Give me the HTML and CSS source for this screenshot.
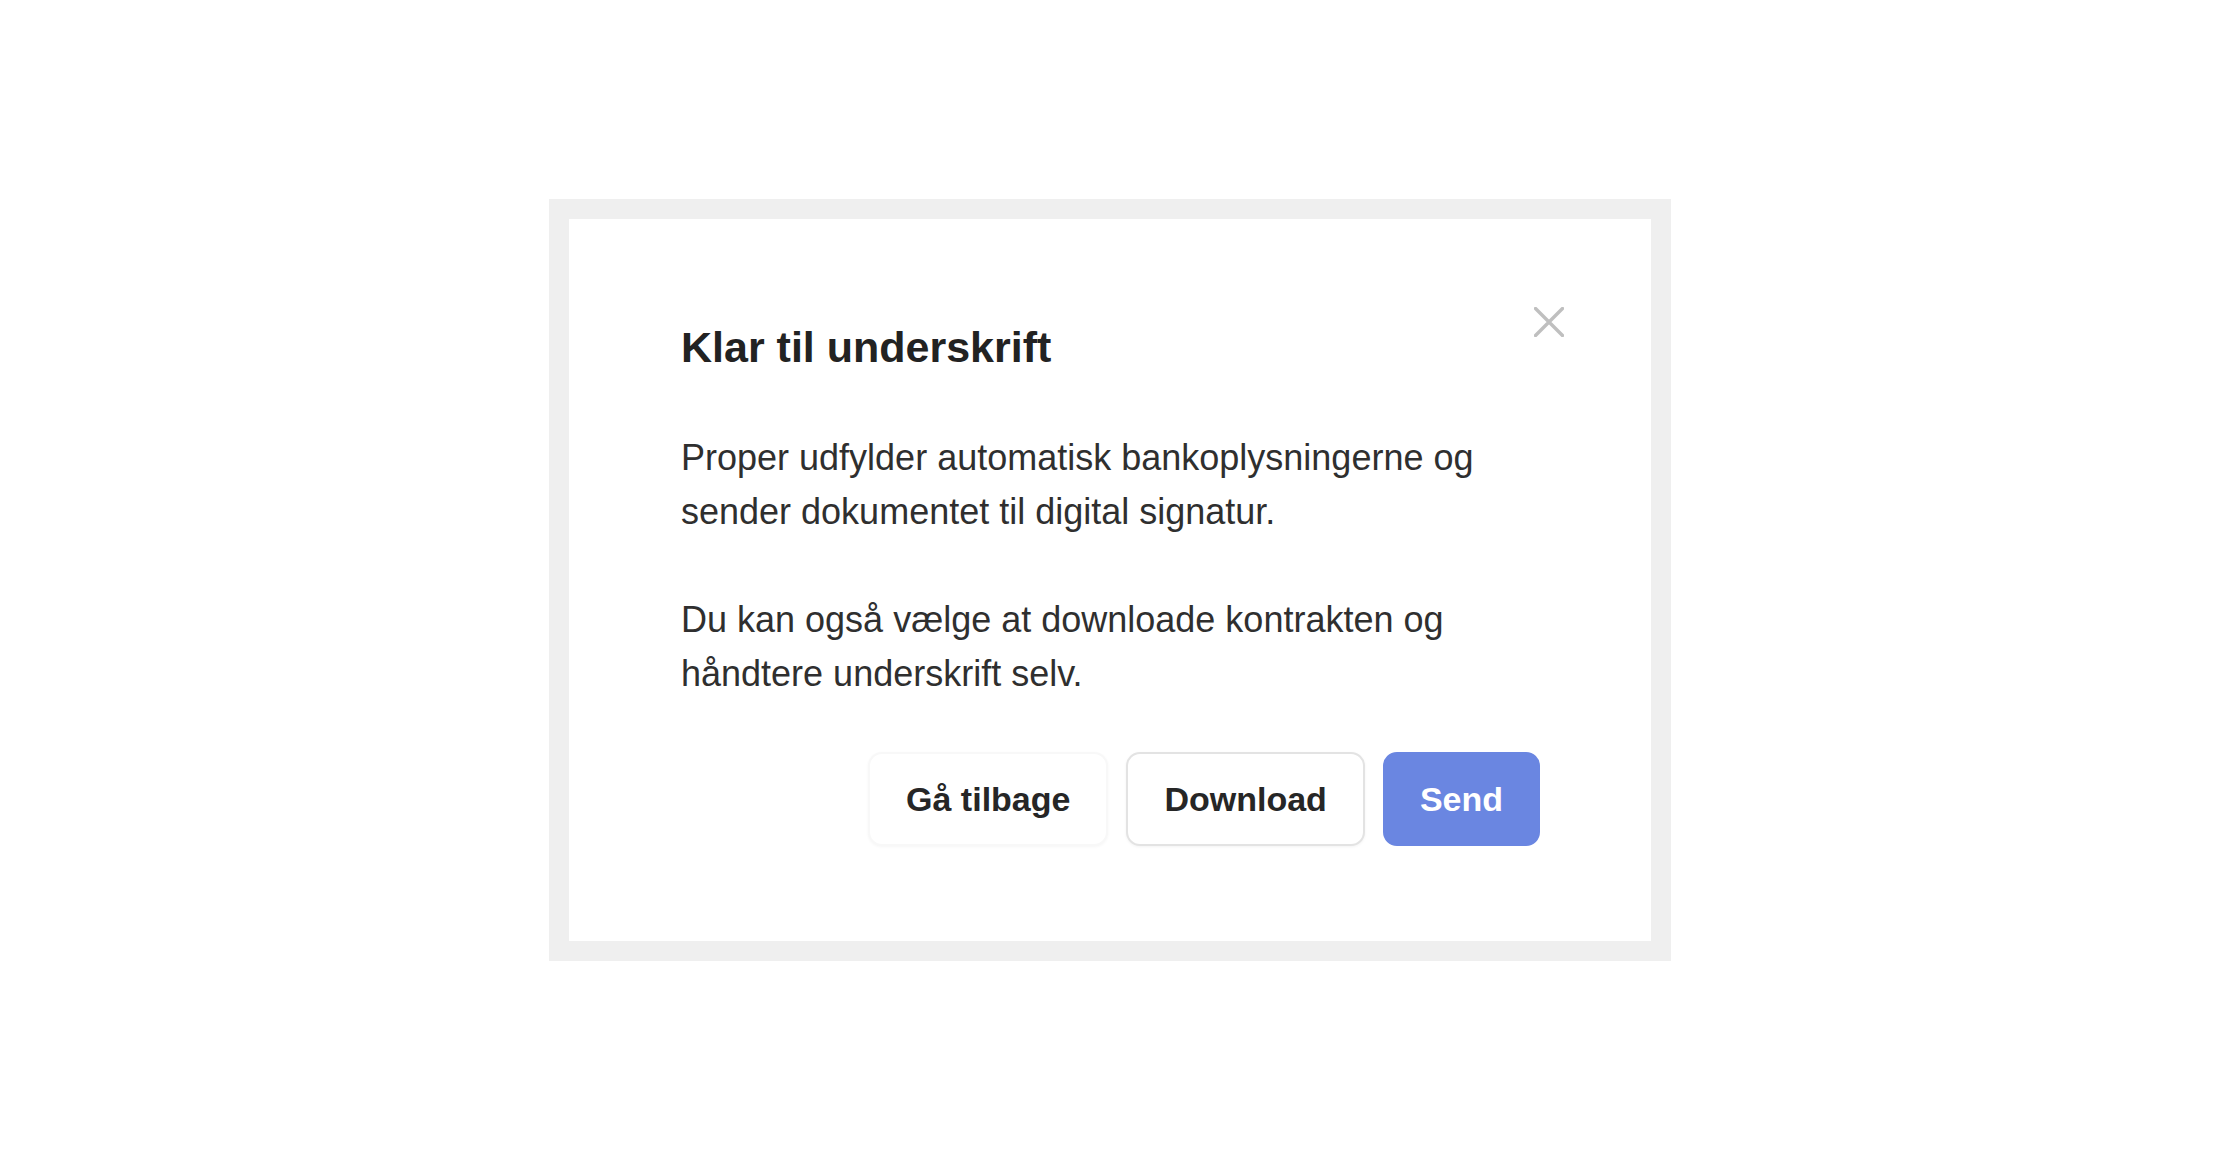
FILE: index.html
```html
<!DOCTYPE html>
<html lang="da">
<head>
<meta charset="utf-8">
<title>Klar til underskrift</title>
<link rel="stylesheet" href="styles.css">
</head>
<body>
<div class="stage">
  <div class="frame">
    <div class="dialog" role="dialog" aria-labelledby="dlg-title">
      <button class="close" type="button" aria-label="Luk">
        <svg viewBox="0 0 30 30" width="30" height="30" aria-hidden="true">
          <path d="M1.5 1.5 L28.5 28.5 M28.5 1.5 L1.5 28.5" fill="none" stroke="#bfbfbf" stroke-width="3.4" stroke-linecap="round"/>
        </svg>
      </button>
      <h2 class="title" id="dlg-title">Klar til underskrift</h2>
      <p class="text">Proper udfylder automatisk bankoplysningerne og sender dokumentet til digital signatur.</p>
      <p class="text text-gap">Du kan også vælge at downloade kontrakten og håndtere underskrift selv.</p>
      <div class="actions">
        <button class="btn btn-ghost" type="button">Gå tilbage</button>
        <button class="btn btn-outline" type="button">Download</button>
        <button class="btn btn-primary" type="button">Send</button>
      </div>
    </div>
  </div>
</div>
</body>
</html>
```
FILE: styles.css
```css
html, body {
  margin: 0;
  padding: 0;
  background: #ffffff;
}

body {
  font-family: "Liberation Sans", Arial, Helvetica, sans-serif;
  color: #2e2e2e;
}

.stage {
  height: 100vh;
  display: flex;
  align-items: center;
  justify-content: center;
}

.frame {
  padding: 20px;
  background: #efefef;
}

.dialog {
  position: relative;
  box-sizing: border-box;
  width: 1082px;
  height: 722px;
  padding: 102px 111px 0 112px;
  background: #ffffff;
}

.close {
  position: absolute;
  top: 88px;
  right: 87px;
  width: 30px;
  height: 30px;
  padding: 0;
  border: 0;
  background: transparent;
  display: block;
  cursor: pointer;
}

.close svg {
  display: block;
}

.title {
  margin: 0;
  font-size: 43px;
  line-height: 52px;
  font-weight: 700;
  color: #222222;
}

.text {
  margin: 58px 0 0 0;
  font-size: 36px;
  line-height: 54px;
  color: #2f2f2f;
}

.text-gap {
  margin-top: 54px;
}

.actions {
  margin-top: 51px;
  display: flex;
  justify-content: flex-end;
  gap: 18px;
}

.btn {
  box-sizing: border-box;
  height: 94px;
  padding: 0 36px;
  border-radius: 14px;
  border: 2px solid transparent;
  font-family: "Liberation Sans", Arial, Helvetica, sans-serif;
  font-size: 34px;
  font-weight: 700;
  line-height: 1;
  cursor: pointer;
}

.btn-ghost {
  background: #ffffff;
  color: #262626;
  border-color: #f8f8f8;
  box-shadow: 0 1px 3px rgba(0, 0, 0, 0.04);
}

.btn-outline {
  background: #ffffff;
  color: #262626;
  border-color: #e3e3e3;
  box-shadow: 0 1px 3px rgba(0, 0, 0, 0.05);
}

.btn-primary {
  padding: 0 35px;
  background: #6a86e1;
  border-color: #6a86e1;
  color: #ffffff;
}
```
